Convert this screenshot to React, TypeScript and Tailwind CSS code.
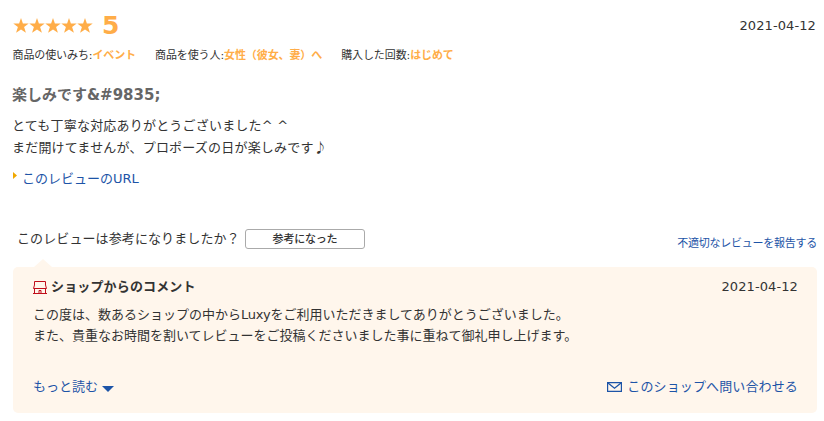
import React from 'react';

const attributes = [
  { label: '商品の使いみち:', value: 'イベント' },
  { label: '商品を使う人:', value: '女性（彼女、妻）へ' },
  { label: '購入した回数:', value: 'はじめて' }
];

const Star = () => (
  <svg className="w-4 h-[15px] shrink-0" viewBox="0 0 16 15" fill="#ffad48">
    <path d="M8 0 L9.9 5.6 H15.7 L11.1 9.1 L12.9 14.8 L8 11.4 L3.1 14.8 L4.9 9.1 L.3 5.6 H6.1 Z" />
  </svg>
);

const ShopIcon = () => (
  <svg className="w-[14px] h-[13px] shrink-0" viewBox="0 0 14 13" fill="none" stroke="#c00d1a">
    <path d="M1.5 .5 H12.5 V4 L13.5 7.5 H.5 L1.5 4 Z" />
    <path d="M1.5 7.5 V12.5 M12.5 7.5 V12.5 M0 12.5 H14" />
    <path d="M6 12 V9.5 H8 V12" strokeWidth="1" />
  </svg>
);

const MailIcon = () => (
  <svg className="w-[15px] h-[10px] shrink-0" viewBox="0 0 15 10" fill="none" stroke="#1d54a7">
    <path d="M.6 .6 H14.4 V9.4 H.6 Z" strokeWidth="1.2" />
    <path d="M1 1 L7.5 6.2 L14 1" strokeWidth="1.3" />
  </svg>
);

const ReviewBody = () => (
  <div className="pl-3 pr-2">
    <div className="flex justify-between h-[47px] pt-3">
      <div className="flex h-[27px] items-center">
        <div className="flex pl-px">
          {[1, 2, 3, 4, 5].map((n) => <Star key={n} />)}
        </div>
        <span className="ml-[9px] text-[25px] leading-[27px] font-bold text-[#ffad48]">5</span>
      </div>
      <span className="leading-7 tracking-[0.1px]">2021-04-12</span>
    </div>

    <div className="flex gap-[19px] pl-[0.5px] text-[11px] leading-[18px] tracking-[-0.1px]">
      {attributes.map((item) => (
        <div key={item.label}>
          {item.label}
          <span className="font-bold text-[#ffad48]">{item.value}</span>
        </div>
      ))}
    </div>

    <h3 className="mt-[19px] text-[15px] leading-[22px] font-bold text-[#666]">楽しみです&amp;#9835;</h3>

    <p className="mt-[9px] leading-[21px] tracking-[0.2px]">
      とても丁寧な対応ありがとうございました^ ^<br />
      まだ開けてませんが、プロポーズの日が楽しみです<span className="font-['Noto_Sans_CJK_JP',sans-serif]">♪</span>
    </p>

    <a className="mt-[11px] flex items-start leading-5 text-[#1d54a7]">
      <svg className="mt-[3px] mr-[5px] ml-px w-1 h-[7px]" viewBox="0 0 4 7" fill="#f0a800">
        <path d="M0 0 L4 3.5 L0 7 Z" />
      </svg>
      このレビューのURL
    </a>
  </div>
);

const HelpfulRow = () => (
  <div className="mt-10 flex h-[30px] justify-between pl-[17px] pr-[7px]">
    <div className="flex h-5 items-center">
      <span className="w-[221px] whitespace-nowrap tracking-[0.1px]">このレビューは参考になりましたか？</span>
      <button className="ml-[7px] h-5 w-[120px] rounded-[3px] border border-[#aaa] bg-white pt-px text-[11px] leading-[18px] font-medium tracking-[-0.2px]">
        参考になった
      </button>
    </div>
    <a className="pt-[6px] text-[11px] leading-[18px] tracking-[-0.25px] text-[#1d54a7]">不適切なレビューを報告する</a>
  </div>
);

const ShopComment = () => (
  <div className="mr-[7px] ml-[13px]">
    <svg className="ml-[21px] h-2 w-[18px]" viewBox="0 0 18 8" fill="#fff6ec">
      <path d="M0 8 L9 0 L18 8 Z" />
    </svg>
    <div className="h-[146px] rounded-[5px] bg-[#fff6ec] pt-[10px] pr-[19px] pl-5">
      <div className="flex h-5 items-center justify-between">
        <div className="flex items-center gap-1">
          <ShopIcon />
          <span className="font-bold tracking-[0.15px]">ショップからのコメント</span>
        </div>
        <span className="tracking-[0.1px]">2021-04-12</span>
      </div>
      <p className="mt-2 leading-[20.5px]">
        この度は、数あるショップの中から<span className="tracking-[-0.3px]">Luxy</span>をご利用いただきましてありがとうございました。<br />
        また、貴重なお時間を割いてレビューをご投稿くださいました事に重ねて御礼申し上げます。
      </p>
      <div className="mt-[31px] flex h-5 items-center justify-between text-[#1d54a7]">
        <a className="flex items-center">
          もっと読む
          <svg className="mt-1 ml-1 h-[6px] w-3" viewBox="0 0 12 6" fill="#1d54a7">
            <path d="M0 0 H12 L6 6 Z" />
          </svg>
        </a>
        <a className="flex items-center gap-[5px] tracking-[0.13px]">
          <MailIcon />
          このショップへ問い合わせる
        </a>
      </div>
    </div>
  </div>
);

export default function App() {
  return (
    <div className="h-[421px] w-[824px] overflow-hidden bg-white font-['DejaVu_Sans','Noto_Sans_CJK_JP',sans-serif] text-[13px] leading-5 text-[#333]">
      <ReviewBody />
      <HelpfulRow />
      <ShopComment />
    </div>
  );
}
